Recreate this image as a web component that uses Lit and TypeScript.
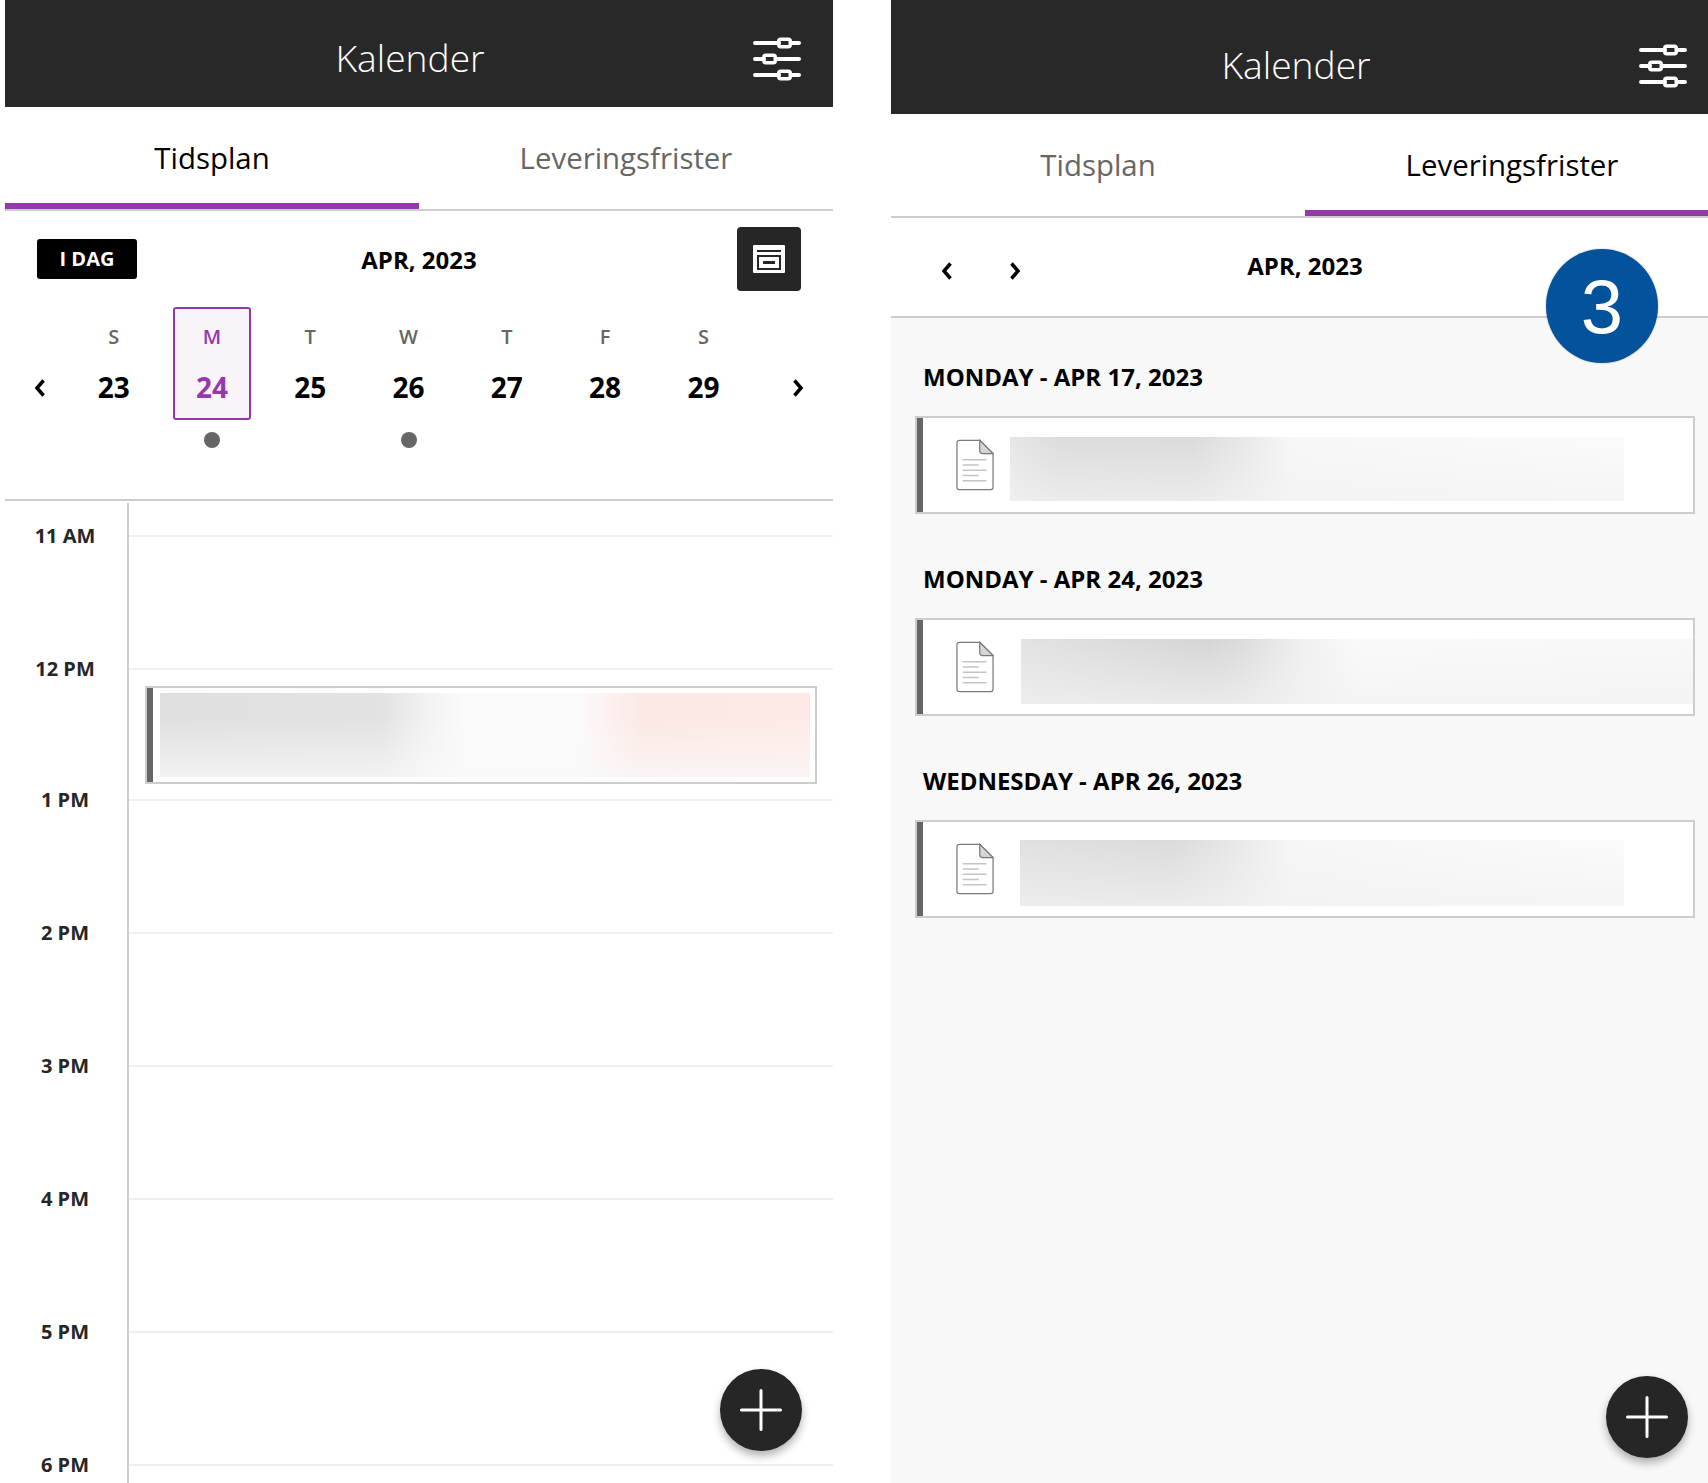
import { LitElement, html, css } from "lit";
import { customElement } from "lit/decorators.js";

const sliders = html`<svg class="sliders" viewBox="0 0 48 44" width="48" height="44" fill="none" stroke="#fff" stroke-width="4" stroke-linecap="round">
  <path d="M2 6H26M39 6H46M2 22H11M24 22H46M2 38H26M39 38H46"/>
  <rect x="25.750" y="2.250" width="11.500" height="7.500" rx="2" stroke-width="3.500"/>
  <rect x="10.750" y="18.250" width="11.500" height="7.500" rx="2" stroke-width="3.500"/>
  <rect x="25.750" y="34.250" width="11.500" height="7.500" rx="2" stroke-width="3.500"/>
</svg>`;

const chevron = (dir: "l" | "r") => html`<svg class="chev" viewBox="0 0 12 18" width="12" height="18" fill="none" stroke="#000" stroke-width="3.500">
  <path d=${dir === "l" ? "M9.500 1.500L3 9l6.500 7.500" : "M2.500 1.500L9 9l-6.500 7.500"}/>
</svg>`;

const plus = html`<svg viewBox="0 0 42 42" width="42" height="42" stroke="#fff" stroke-width="3" stroke-linecap="round"><path d="M21 1.500V40.500M1.500 21H40.500"/></svg>`;

const calIcon = html`<svg viewBox="0 0 32 28" width="32" height="28">
  <path fill="#fff" fill-rule="evenodd" d="M0 1a1 1 0 0 1 1-1H31a1 1 0 0 1 1 1V27a1 1 0 0 1-1 1H1a1 1 0 0 1-1-1ZM4 5H28V7H4ZM4 10H28V25H4ZM6 12H26V23H6ZM10 16H22V19H10Z"/>
</svg>`;

const docIcon = html`<svg class="doc" viewBox="0 0 40 54" width="38" height="52" fill="none">
  <path d="M3.500 1H25L39 15V50.500a2.500 2.500 0 0 1-2.500 2.500H3.500A2.500 2.500 0 0 1 1 50.500V3.500A2.500 2.500 0 0 1 3.500 1Z" fill="#fff" stroke="#7a7a7a" stroke-width="1.300"/>
  <path d="M25 1L39 15H28a3 3 0 0 1-3-3Z" fill="#d6d6d6" stroke="#7a7a7a" stroke-width="1.300"/>
  <path d="M7 21.500H32M7 27H24M7 32.500H32M7 38H24M7 43.500H32" stroke="#c4c4c4" stroke-width="1.500"/>
</svg>`;

@customElement("app-header")
class AppHeader extends LitElement {
  static properties = { tall: { type: Boolean } };
  tall = false;
  static styles = css`
    :host { display: block; }
    .bar { background: #282828; height: 107px; display: flex; align-items: center; justify-content: center; position: relative; padding-top: 7px; box-sizing: border-box; }
    .bar.tall { height: 114px; padding-top: 14px; }
    h1 { margin: 0 0 0 -18px; font: 300 37.200px "Open Sans", sans-serif; color: #fff; }
    .sliders { position: absolute; right: 32px; top: 37px; }
    .tall .sliders { top: 44px; }
  `;
  render() {
    return html`<div class="bar ${this.tall ? "tall" : ""}"><h1>Kalender</h1>${sliders}</div>`;
  }
}

@customElement("tab-bar")
class TabBar extends LitElement {
  static properties = { active: { type: Number } };
  active = 0;
  static styles = css`
    :host { display: block; }
    .tabs { display: grid; grid-template-columns: 1fr 1fr; border-bottom: 2px solid #cdcdcd; height: 102px; }
    .tab { font: 500 29.400px "Open Sans", sans-serif; color: #666; display: flex; align-items: flex-start; justify-content: center; padding-top: 31px; border-bottom: 6px solid transparent; }
    .tab.on { color: #000; border-bottom-color: #9538ad; }
  `;
  render() {
    return html`<div class="tabs">
      ${["Tidsplan", "Leveringsfrister"].map((t, i) => html`<div class="tab ${i === this.active ? "on" : ""}">${t}</div>`)}
    </div>`;
  }
}

@customElement("app-root")
class AppRoot extends LitElement {
  static styles = css`
    :host { display: block; width: 1708px; height: 1483px; overflow: hidden; background: #fff; font-family: "Open Sans", sans-serif; }
    .page { display: grid; grid-template-columns: 828px 828px; column-gap: 58px; padding-left: 5px; height: 1483px; }
    .panel { position: relative; height: 1483px; overflow: hidden; display: flex; flex-direction: column; }
    app-header, tab-bar { flex: none; }

    .toprow { flex: none; display: grid; grid-template-columns: 1fr auto 1fr; align-items: center; padding: 16px 32px 0; height: 64px; }
    .today { justify-self: start; width: 100px; height: 40px; box-sizing: border-box; padding-bottom: 2px; background: #000; color: #fff; border-radius: 3px; font-size: 20px; font-weight: 700; display: flex; align-items: center; justify-content: center; }
    .month { font-size: 24px; font-weight: 700; color: #000; }
    .viewbtn { justify-self: end; width: 64px; height: 64px; background: #262626; border-radius: 4px; display: flex; align-items: center; justify-content: center; }

    .week { flex: none; display: grid; grid-template-columns: 59.500px repeat(7, 98.300px) 1fr; align-items: start; margin-top: 16px; height: 192px; border-bottom: 2px solid #cdcdcd; }
    .navcell { height: 112px; display: flex; align-items: center; padding-top: 50px; box-sizing: border-box; }
    .navcell.l { padding-left: 29px; }
    .navcell.r { padding-left: 39px; }
    .day { display: flex; flex-direction: column; align-items: center; }
    .cell { width: 78px; height: 113px; box-sizing: border-box; border: 2px solid transparent; border-radius: 3px; display: flex; flex-direction: column; align-items: center; }
    .day.sel .cell { border-color: #9538ad; background: #f8f4fa; }
    .dow { font-size: 20px; font-weight: 600; color: #666; margin-top: 14px; line-height: 27px; }
    .num { font-size: 28px; font-weight: 700; color: #000; margin-top: 18px; line-height: 38px; }
    .sel .dow, .sel .num { color: #9538ad; }
    .dot { width: 16px; height: 16px; border-radius: 50%; background: #666; margin-top: 12px; }

    .sched { position: relative; flex: 1; min-height: 0; margin-top: 2px; display: grid; grid-template-columns: 124px 1fr; }
    .times { border-right: 2px solid #cdcdcd; box-sizing: border-box; }
    .hour { height: 133px; }
    .hour:first-child { padding-top: 19px; }
    .hour:nth-child(2) { height: 131px; }
    .hour span { display: block; text-align: center; font-size: 20px; font-weight: 700; color: #262626; line-height: 27px; width: 120px; }
    .lines { padding-top: 32px; }
    .line { height: 133px; box-sizing: border-box; border-top: 2px solid #efefef; }
    .line:nth-child(2) { height: 131px; }

    .event { position: absolute; left: 140px; top: 183px; width: 672px; height: 98px; box-sizing: border-box; border: 2px solid #cdcdcd; background: #fff; display: flex; }
    .event .stripe { width: 6px; background: #666; flex: none; }
    .event .blur { flex: 1; margin: 5px 5px 5px 7px; background:
      linear-gradient(180deg, rgba(247,247,247,0) 30%, rgba(249,249,249,.7) 100%),
      linear-gradient(90deg, #e0e0e0 0%, #e2e2e2 34%, #f2f2f2 41%, #fbfbfb 47%, #fbfbfb 64%, #fce8e4 74%, #fdeae6 100%);
    }

    .fab { position: absolute; left: 715px; width: 82px; height: 82px; border-radius: 50%; background: #262626; display: flex; align-items: center; justify-content: center; box-shadow: 0 5px 9px rgba(0,0,0,.3); }
    .left .fab { top: 1369px; }
    .right .fab { top: 1376px; }

    .monthrow { flex: none; display: flex; align-items: center; height: 98px; border-bottom: 2px solid #cdcdcd; position: relative; justify-content: center; }
    .monthrow .arrows { position: absolute; left: 50px; top: 44px; display: flex; gap: 56px; }
    .monthrow .month { margin-top: -3px; }
    .list { flex: 1; min-height: 0; background: #f8f8f8; padding: 42px 24px 0 24px; }
    .gh { font-size: 24px; font-weight: 700; color: #000; line-height: 33px; margin: 0 0 23px 8px; }
    .card { height: 98px; box-sizing: border-box; border: 2px solid #cdcdcd; background: #fff; display: flex; align-items: center; margin-bottom: 48px; overflow: hidden; }
    .card .stripe { width: 6px; align-self: stretch; background: #666; flex: none; }
    .card .doc { margin-left: 33px; flex: none; }
    .card .blur { flex: none; margin-top: 8px; }
    .b1 { height: 64px; margin-left: 16px; width: 614px; background:
      linear-gradient(180deg, rgba(242,242,242,0) 0%, rgba(242,242,242,.7) 100%),
      linear-gradient(90deg, #e6e6e6 0, #dcdcdc 8%, #dbdbdb 30%, #e8e8e8 38%, #f7f7f7 46%, #fbfbfb 100%); }
    .b2 { height: 65px; margin-left: 27px; width: 674px; background:
      linear-gradient(180deg, rgba(242,242,242,0) 0%, rgba(242,242,242,.7) 100%),
      linear-gradient(90deg, #e2e2e2 0, #d5d5d5 28%, #dcdcdc 33%, #f0f0f0 42%, #fafafa 50%, #f8f8f8 100%); }
    .b3 { height: 66px; margin-left: 26px; width: 604px; background:
      linear-gradient(180deg, rgba(242,242,242,0) 0%, rgba(242,242,242,.7) 100%),
      linear-gradient(90deg, #e0e0e0 0, #dbdbdb 25%, #e4e4e4 33%, #f6f6f6 45%, #fbfbfb 100%); }

    .badge { position: absolute; left: 655px; top: 249px; width: 112px; height: 114px; border-radius: 50%; background: #03529c; color: #fff; display: flex; align-items: center; justify-content: center; font: 400 76px "Liberation Sans", Arial, sans-serif; box-shadow: 0 0 2px rgba(0,0,0,.3); }
  `;

  render() {
    const days = [["S", 23], ["M", 24], ["T", 25], ["W", 26], ["T", 27], ["F", 28], ["S", 29]];
    const hours = ["11 AM", "12 PM", "1 PM", "2 PM", "3 PM", "4 PM", "5 PM", "6 PM"];
    const cards = [
      ["MONDAY - APR 17, 2023", "b1"],
      ["MONDAY - APR 24, 2023", "b2"],
      ["WEDNESDAY - APR 26, 2023", "b3"],
    ];
    return html`<div class="page">
      <section class="panel left">
        <app-header></app-header>
        <tab-bar .active=${0}></tab-bar>
        <div class="toprow">
          <div class="today">I DAG</div>
          <div class="month">APR, 2023</div>
          <div class="viewbtn">${calIcon}</div>
        </div>
        <div class="week">
          <div class="navcell l">${chevron("l")}</div>
          ${days.map(([d, n]) => html`<div class="day ${n === 24 ? "sel" : ""}">
            <div class="cell"><div class="dow">${d}</div><div class="num">${n}</div></div>
            ${n === 24 || n === 26 ? html`<div class="dot"></div>` : ""}
          </div>`)}
          <div class="navcell r">${chevron("r")}</div>
        </div>
        <div class="sched">
          <div class="times">${hours.map((h) => html`<div class="hour"><span>${h}</span></div>`)}</div>
          <div class="lines">${hours.map(() => html`<div class="line"></div>`)}</div>
          <div class="event"><div class="stripe"></div><div class="blur"></div></div>
        </div>
        <div class="fab">${plus}</div>
      </section>
      <section class="panel right">
        <app-header tall></app-header>
        <tab-bar .active=${1}></tab-bar>
        <div class="monthrow">
          <div class="arrows">${chevron("l")}${chevron("r")}</div>
          <div class="month">APR, 2023</div>
        </div>
        <div class="list">
          ${cards.map(([t, b]) => html`<div class="group">
            <div class="gh">${t}</div>
            <div class="card"><div class="stripe"></div>${docIcon}<div class="blur ${b}"></div></div>
          </div>`)}
        </div>
        <div class="badge">3</div>
        <div class="fab">${plus}</div>
      </section>
    </div>`;
  }
}
